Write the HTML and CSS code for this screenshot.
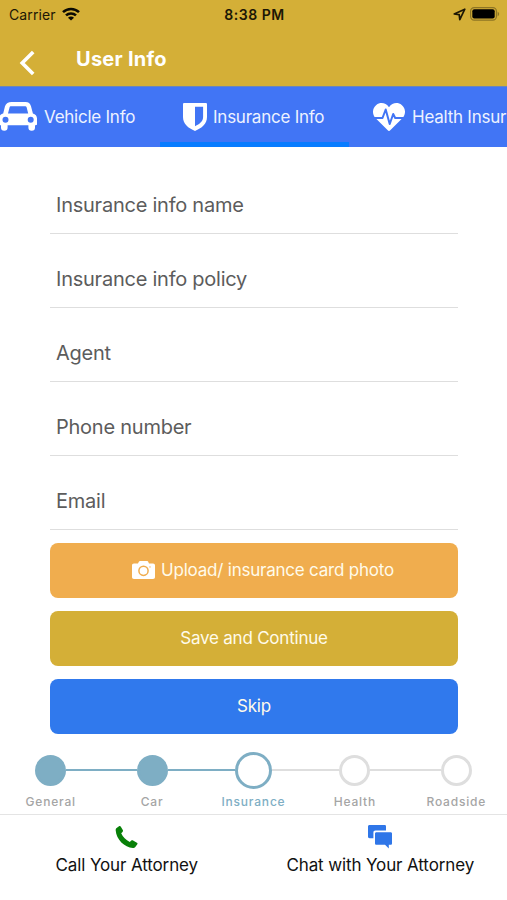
FILE: index.html
```html
<!DOCTYPE html>
<html lang="en">
<head>
  <meta charset="UTF-8" />
  <meta name="viewport" content="width=device-width, initial-scale=1.0"/>
  <title>User Info</title>
  <link rel="stylesheet" href="styles.css">
</head>
<body>
  <header class="header">
    <div class="statusBar">
      <div class="carrier">
        <span class="carrierName">Carrier</span>
        <svg width="18" height="14" viewBox="0 0 18 14" fill="none" stroke="#0b0a03" stroke-width="2.6">
          <path d="M1 5.1C5.5.9 12.5.9 17 5.1"/>
          <path d="M4 8.400c2.800-2.600 7.200-2.600 10 0"/>
          <path d="M9 13.600 6 10.700c1.600-1.500 4.400-1.500 6 0z" fill="#0b0a03" stroke="none"/>
        </svg>
      </div>
      <div class="clock">8:38 PM</div>
      <div class="battery">
        <svg width="13" height="13" viewBox="0 0 13 13" fill="none" stroke="#1c1705" stroke-width="1.7" stroke-linejoin="round">
          <path d="M11.800 1.200 1.200 6l5 .7.600 4.900z"/>
        </svg>
        <svg width="30" height="14" viewBox="0 0 30 14">
          <rect x=".6" y=".6" width="25.8" height="12.6" rx="3.6" fill="none" stroke="#8d7525" stroke-width="1.2"/>
          <rect x="2.3" y="2.3" width="22.4" height="9.2" rx="2" fill="#000"/>
          <path d="M27.600 4.600q3.200 2.400 0 4.800z" fill="#8d7525"/>
        </svg>
      </div>
    </div>
    <div class="titleBar">
      <svg class="backIcon" width="16" height="26" viewBox="0 0 16 26" fill="none" stroke="#fff" stroke-width="3.6">
        <path d="M14.200 2 3.200 13l11 11"/>
      </svg>
      <h1>User Info</h1>
    </div>
  </header>

  <nav class="tabs">
    <a class="tab vehicle">
      <svg width="38" height="29" viewBox="0 0 38 29">
        <path fill="#fff" fill-rule="evenodd" d="M12.5 0h14c3 0 4.800 1.500 5.500 4.200l1.900 7.300c2.500.5 4.100 2.500 4.100 5V22c0 .8-.4 1.200-1.200 1.200H36v2.300a3.300 3.300 0 0 1-6.600 0v-2.300H8.600v2.300a3.300 3.300 0 0 1-6.600 0v-2.300H1.200C.4 23.200 0 22.800 0 22v-5.500c0-2.500 1.700-4.500 4.200-5L6 4.200C6.800 1.500 9.500 0 12.500 0zM9 11.400h20.200l-1.600-6.200c-.2-.7-.6-1-1.300-1H12c-.8 0-1.200.3-1.400 1zM6.500 14.700a3 3 0 1 0 0 6 3 3 0 0 0 0-6zm25.200 0a3 3 0 1 0 0 6 3 3 0 0 0 0-6z"/>
      </svg>
      <span>Vehicle Info</span>
    </a>
    <a class="tab insurance active">
      <svg width="24" height="28" viewBox="0 0 24 28">
        <path fill="#fff" fill-rule="evenodd" d="M1.400 0h21.200c.9 0 1.400.5 1.400 1.400V14c0 6.800-5.300 11.200-12 14C5.300 25.200 0 20.800 0 14V1.400C0 .5.500 0 1.400 0zM12 3.800v19.400c4.700-2.200 8.100-5 8.100-9.200V3.800z"/>
      </svg>
      <span>Insurance Info</span>
    </a>
    <a class="tab health">
      <svg width="32" height="28" viewBox="0 0 32 28">
        <path fill="#fff" d="M16 4.200C19.200-.4 24.800-1.100 28.700 2c4.300 3.500 4.200 9.200.9 13L17 27.500c-.7.700-1.300.7-2 0L2.400 15C-.9 11.200-1 5.500 3.300 2 7.200-1.100 12.800-.4 16 4.200z"/>
        <path fill="none" stroke="#4175f5" stroke-width="2" stroke-linejoin="round" d="M0 15h9.500l3.200-8.500 4 14.500 3.500-10 2 4H32"/>
      </svg>
      <span>Health Insur</span>
    </a>
  </nav>

  <main class="form">
    <div class="field">Insurance info name</div>
    <div class="field">Insurance info policy</div>
    <div class="field">Agent</div>
    <div class="field">Phone number</div>
    <div class="field">Email</div>

    <button class="btn upload">
      <svg width="23" height="18" viewBox="0 0 23 18">
        <path fill="#fff" d="M8.200 0h6.600c.8 0 1.200.4 1.500 1l.7 1.600h4c1.300 0 2 .7 2 2V16c0 1.300-.7 2-2 2H2c-1.300 0-2-.7-2-2V4.600c0-1.300.7-2 2-2h4L6.700 1c.3-.6.7-1 1.500-1z"/>
        <circle cx="11.5" cy="9.8" r="4.6" fill="none" stroke="#f0ad4e" stroke-width="1.5"/>
        <circle cx="18" cy="5.9" r=".7" fill="#f0ad4e"/>
      </svg>
      <span>Upload/ insurance card photo</span>
    </button>
    <button class="btn save">Save and Continue</button>
    <button class="btn skip">Skip</button>
  </main>

  <div class="steps">
    <div class="step done"><div class="track"><i class="dot"></i></div><span>General</span></div>
    <div class="step done"><div class="track"><i class="dot"></i></div><span>Car</span></div>
    <div class="step current"><div class="track"><i class="dot"></i></div><span>Insurance</span></div>
    <div class="step"><div class="track"><i class="dot"></i></div><span>Health</span></div>
    <div class="step"><div class="track"><i class="dot"></i></div><span>Roadside</span></div>
  </div>

  <footer class="footer">
    <a class="contact call">
      <svg width="24" height="24" viewBox="0 0 24 24">
        <path fill="#088008" d="M1.300 3.200 4 1.200c.7-.4 1.300-.3 1.700.3l2.100 3.600c.4.7.2 1.300-.3 1.800L6.200 8.300c1.700 3.700 4.700 6.700 8.600 8.600l1.500-1.300c.6-.5 1.200-.6 1.800-.2l3.800 2.300c.7.400.8 1 .4 1.600l-2 2.700c-.6.8-1.400 1-2.400 1C9.500 22.200 1.300 14.500.7 5.400c0-.9 0-1.600.6-2.200z"/>
      </svg>
      <span>Call Your Attorney</span>
    </a>
    <a class="contact chat">
      <svg width="24" height="24" viewBox="0 0 24 24">
        <path fill="#2f76e8" d="M1.700 0h15C17.600 0 18 .5 18 1.500v4H7.500C6 5.500 5.400 6.200 5.400 7.600v5.700H1.700C.5 13.300 0 12.800 0 11.600V1.700C0 .5.500 0 1.700 0z"/>
        <path fill="#2f76e8" d="M8.500 7.200h14c1 0 1.500.5 1.500 1.500v9.600c0 1-.5 1.500-1.500 1.500h-1.700v3.800l-3.800-3.800H8.500c-1 0-1.500-.5-1.500-1.500V8.700c0-1 .5-1.500 1.500-1.500z"/>
      </svg>
      <span>Chat with Your Attorney</span>
    </a>
  </footer>
</body>
</html>
```
FILE: styles.css
```css
* {
  box-sizing: border-box;
}

body {
  margin: 0;
  height: 900px;
  overflow: hidden;
  font-family: Inter, 'Liberation Sans', sans-serif;
  background: #fff;
  color: #111;
}

svg {
  display: block;
  flex: none;
}

.header {
  height: 86px;
  background: #d4af37;
}

.statusBar {
  display: grid;
  grid-template-columns: 1fr auto 1fr;
  align-items: center;
  height: 28px;
  padding: 0 7px 0 9px;
  color: #1c1705;
}

.carrier {
  display: flex;
  align-items: center;
  gap: 6px;
  font-size: 14px;
  letter-spacing: 0.1px;
}

.clock {
  font-size: 14px;
  font-weight: 600;
  letter-spacing: 0.5px;
}

.battery {
  display: flex;
  align-items: center;
  justify-content: flex-end;
  gap: 4px;
}

.titleBar {
  display: flex;
  padding-left: 19px;
}

.backIcon {
  margin-top: 22px;
}

h1 {
  margin: 18px 0 0 41px;
  font-size: 20px;
  line-height: 26px;
  font-weight: 700;
  letter-spacing: 0.25px;
  color: #fff;
}

.tabs {
  display: flex;
  height: 61px;
  background: #4175f5;
  border-top: 1px solid #6a86b8;
  overflow: hidden;
}

.tab {
  display: flex;
  flex: none;
  align-items: center;
  height: 60px;
  border-bottom: 5px solid transparent;
  padding-top: 4px;
  font-size: 17px;
  letter-spacing: -0.24px;
  color: #edf2ff;
  white-space: nowrap;
}

.vehicle {
  width: 161px;
  gap: 7px;
  margin-left: -1px;
}

.insurance {
  width: 189px;
  gap: 6px;
  padding-left: 23px;
}

.tab.active {
  border-bottom-color: #087cff;
}

.health {
  gap: 7px;
  padding-left: 24px;
}

.form {
  padding: 13px 49px 0 50px;
}

.field {
  height: 74px;
  padding: 31px 6px 0;
  border-bottom: 1px solid #dedede;
  font-size: 20px;
  line-height: 28px;
  letter-spacing: -0.24px;
  color: #5c5c5c;
}

.btn {
  display: flex;
  align-items: center;
  justify-content: center;
  gap: 6px;
  width: 100%;
  height: 55px;
  margin-top: 13px;
  border: 0;
  border-radius: 8px;
  padding: 0 0 2px;
  font-family: inherit;
  font-size: 17px;
  letter-spacing: -0.22px;
  color: #fffbea;
}

.upload {
  padding-left: 18px;
  background: #f0ad4e;
}

.save {
  background: #d4af37;
}

.skip {
  background: #3079ed;
}

.steps {
  display: grid;
  grid-template-columns: repeat(5, 1fr);
  height: 80px;
  padding-top: 17px;
}

.step {
  text-align: center;
  font-size: 12px;
  font-weight: 500;
  letter-spacing: 0.8px;
  color: #a5a5a5;
}

.track {
  display: flex;
  align-items: center;
  height: 38px;
}

/* connectors fill the space on either side of the dot */
.track::before,
.track::after {
  content: '';
  flex: 1;
  height: 2px;
  background: #dedede;
}

.step:first-child .track::before,
.step:last-child .track::after {
  background: none;
}

.dot {
  width: 31px;
  height: 31px;
  border: 3px solid #dedede;
  border-radius: 50%;
}

.done .track::before,
.done .track::after,
.current .track::before {
  background: #7eaec4;
}

.done .dot {
  background: #7eaec4;
  border-color: #7eaec4;
}

.current .dot {
  width: 37px;
  height: 37px;
  border-color: #7eaec4;
}

.step span {
  display: block;
  margin-top: 5px;
  line-height: 16px;
}

.current span {
  color: #7eaec4;
}

.footer {
  display: grid;
  grid-template-columns: 1fr 1fr;
  height: 86px;
  border-top: 1px solid #e4e4e4;
}

.contact {
  display: flex;
  flex-direction: column;
  align-items: center;
  gap: 5px;
  padding-top: 10px;
  font-size: 17px;
  line-height: 22px;
  letter-spacing: -0.12px;
}
```
